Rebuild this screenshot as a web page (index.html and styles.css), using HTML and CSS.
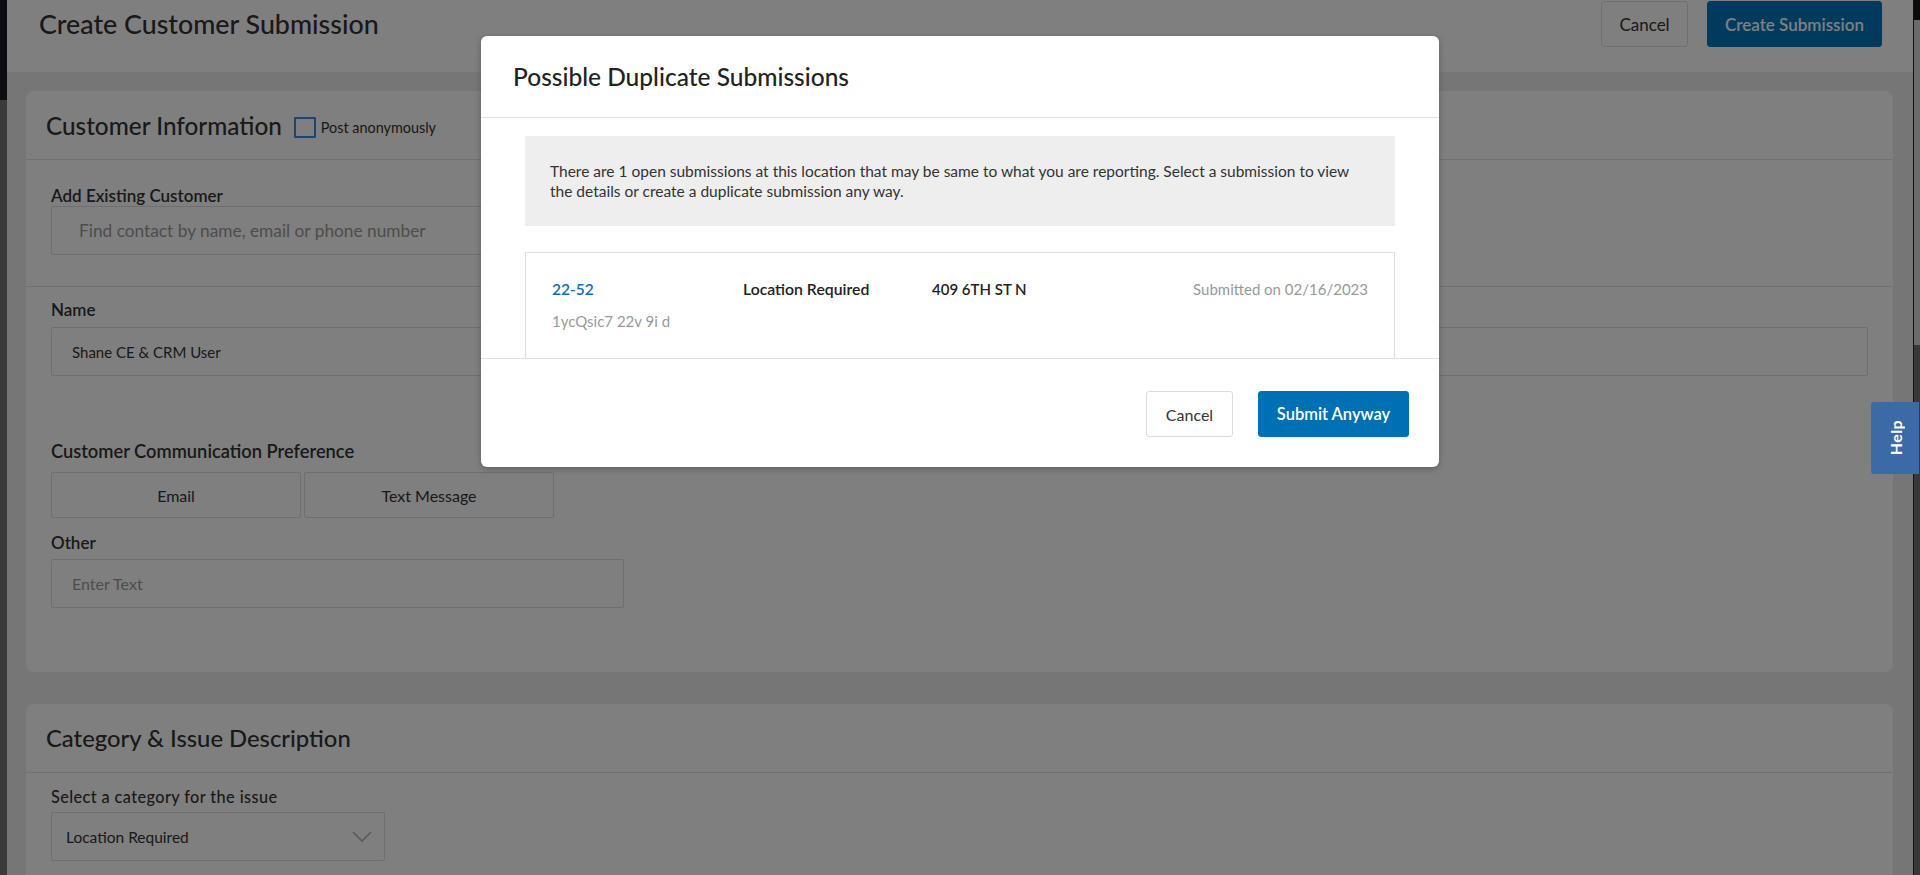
FILE: index.html
```html
<!DOCTYPE html>
<html lang="en">
<head>
<meta charset="utf-8">
<title>Create Customer Submission</title>
<link rel="stylesheet" href="styles.css">
</head>
<body>
<div class="app">
  <div class="shell-edge"><div class="shell-edge-top"></div></div>

  <div class="frame">
    <header class="page-header">
      <h1 class="page-title">Create Customer Submission</h1>
      <div class="header-actions">
        <button class="btn btn-default btn-cancel">Cancel</button>
        <button class="btn btn-primary btn-create">Create Submission</button>
      </div>
    </header>

    <main class="page-body">
      <section class="card card-customer">
        <div class="card-head">
          <h2 class="card-title">Customer Information</h2>
          <label class="anon"><span class="checkbox"></span><span class="anon-text">Post anonymously</span></label>
        </div>
        <div class="card-section section-search">
          <label class="field-label">Add Existing Customer</label>
          <div class="input input-search"><span class="placeholder">Find contact by name, email or phone number</span></div>
        </div>
        <div class="card-section section-contact">
          <label class="field-label">Name</label>
          <div class="input"><span class="value">Shane CE &amp; CRM User</span></div>
          <h3 class="group-label">Customer Communication Preference</h3>
          <div class="toggle-group">
            <button class="toggle">Email</button>
            <button class="toggle">Text Message</button>
          </div>
          <label class="field-label">Other</label>
          <div class="input input-other"><span class="placeholder">Enter Text</span></div>
        </div>
      </section>

      <section class="card card-category">
        <div class="card-head">
          <h2 class="card-title card-title-category">Category &amp; Issue Description</h2>
        </div>
        <div class="card-section section-category">
          <label class="field-label field-label-light">Select a category for the issue</label>
          <div class="input select">
            <span class="value">Location Required</span>
            <svg class="chevron" width="20" height="12" viewBox="0 0 20 12"><polyline points="1,1 10,10 19,1" fill="none" stroke="#b5b5b5" stroke-width="1.6"/></svg>
          </div>
        </div>
      </section>
    </main>

    <div class="backdrop"></div>

    <div class="modal" role="dialog">
      <div class="modal-header">
        <h2 class="modal-title">Possible Duplicate Submissions</h2>
      </div>
      <div class="modal-body">
        <div class="notice">There are 1 open submissions at this location that may be same to what you are reporting. Select a submission to view the details or create a duplicate submission any way.</div>
        <div class="dup-card">
          <a class="dup-id">22-52</a>
          <span class="dup-cat">Location Required</span>
          <span class="dup-addr">409 6TH ST N</span>
          <span class="dup-date">Submitted on 02/16/2023</span>
          <span class="dup-sub">1ycQsic7 22v 9i d</span>
        </div>
      </div>
      <div class="modal-footer">
        <button class="btn btn-default btn-mcancel">Cancel</button>
        <button class="btn btn-primary btn-submit">Submit Anyway</button>
      </div>
    </div>
  </div>

  <div class="scrollbar"><div class="scroll-thumb"></div></div>

  <a class="help-tab"><span class="help-text">Help</span></a>
</div>
</body>
</html>
```

FILE: styles.css
```css
* { box-sizing: border-box; }

html, body {
  margin: 0;
  padding: 0;
  height: 100%;
  overflow: hidden;
}

body {
  font-family: "Lato", "Open Sans", sans-serif;
  color: #333;
  background: #3b3b3b;
}

.app {
  display: flex;
  height: 875px;
  position: relative;
}

/* outer shell edges */
.shell-edge {
  width: 7px;
  flex: none;
  background: #3b3b3b;
}
.shell-edge-top {
  height: 100px;
  background: #0c0c12;
}

.scrollbar {
  width: 7px;
  flex: none;
  border-left: 1px solid #121212;
  background: linear-gradient(#0b0b0b 0 20px, #383838 20px);
}
.scroll-thumb {
  margin-top: 20px;
  height: 325px;
  background: #6b6b6b;
}

/* framed page */
.frame {
  flex: 1;
  position: relative;
  overflow: hidden;
  background: #ececec;
}

.page-header {
  height: 72px;
  background: #fff;
  display: flex;
  justify-content: space-between;
  align-items: flex-start;
  padding: 1px 31px 0 32px;
}

.page-title {
  margin: 0;
  font-size: 26.8px;
  line-height: 46px;
  font-weight: 500;
  color: #333;
}

.header-actions {
  display: flex;
  gap: 19px;
}

.btn {
  font-family: inherit;
  height: 46px;
  border-radius: 3px;
  font-size: 17px;
  padding: 0;
  cursor: pointer;
}
.btn-default {
  background: #fff;
  border: 1px solid #dcdcdc;
  color: #333;
}
.btn-primary {
  background: #0070b5;
  border: 1px solid #0070b5;
  color: #fff;
  font-weight: 600;
}
.btn-cancel { width: 87px; }
.btn-create { width: 175px; background: #0074b8; border-color: #0074b8; }

.page-body {
  padding: 19px 20px 0 19px;
  display: flex;
  flex-direction: column;
  gap: 32px;
}

.card {
  background: #fff;
  border-radius: 8px;
}

.card-head {
  height: 69px;
  border-bottom: 1px solid #e2e2e2;
  padding: 0 20px;
  display: flex;
  align-items: center;
  gap: 12px;
}

.card-title {
  margin: 0;
  font-size: 24.3px;
  font-weight: 500;
  color: #333;
}
.card-title-category { font-size: 23.8px; }

.anon {
  display: flex;
  align-items: center;
  gap: 5px;
  margin-top: 4px;
}
.checkbox {
  width: 22px;
  height: 21px;
  border: 2px solid #3b8fd5;
  border-radius: 1px;
}
.anon-text {
  font-size: 14.4px;
  color: #333;
}

.card-section {
  padding: 13px 25px 0;
}
.section-search {
  padding: 26px 25px 31px;
  border-bottom: 1px solid #e2e2e2;
}
.section-contact {
  padding-bottom: 64px;
}

.field-label {
  display: block;
  font-size: 17px;
  line-height: 20px;
  font-weight: 600;
  color: #333;
  margin-bottom: 7px;
}
.section-search .field-label { margin-bottom: 0; }
.field-label-light {
  font-size: 16.3px;
  font-weight: 500;
  margin-top: 1px;
  margin-bottom: 5px;
  letter-spacing: 0.4px;
}

.input {
  height: 49px;
  border: 1px solid #dedede;
  border-radius: 2px;
  display: flex;
  align-items: center;
  padding: 0 20px;
  font-size: 15px;
  background: #fff;
}
.input-search {
  width: 908px;
  padding-left: 27px;
  font-size: 17.3px;
}
.input-other { width: 573px; font-size: 16px; }

.placeholder { color: #9a9a9a; }
.value { color: #333; }

.group-label {
  margin: 64px 0 10px;
  font-size: 18.3px;
  line-height: 22px;
  font-weight: 600;
  color: #333;
}

.toggle-group {
  display: flex;
  gap: 3px;
  margin-bottom: 15px;
}
.toggle {
  font-family: inherit;
  width: 250px;
  height: 46px;
  background: #fff;
  border: 1px solid #dedede;
  border-radius: 2px;
  font-size: 16px;
  color: #333;
}
.section-contact .input-other { margin-top: -1px; }

.select {
  width: 334px;
  justify-content: space-between;
  padding: 0 12px 0 14px;
  font-size: 15.5px;
}
.card-category { min-height: 200px; }

/* backdrop + modal */
.backdrop {
  position: absolute;
  inset: 0;
  background: rgba(0, 0, 0, 0.5);
}

.modal {
  position: absolute;
  top: 36px;
  left: 50%;
  width: 958px;
  transform: translateX(-50%);
  background: #fff;
  border-radius: 6px;
  box-shadow: 0 2px 6px rgba(0,0,0,0.25);
}

.modal-header {
  height: 82px;
  border-bottom: 1px solid #e0e0e0;
  padding: 0 32px;
  display: flex;
  align-items: center;
}
.modal-title {
  margin: 0;
  font-size: 24.5px;
  font-weight: 500;
  color: #222;
}

.modal-body {
  height: 240px;
  overflow: hidden;
  padding: 18px 44px 0;
}

.notice {
  height: 90px;
  background: #eeeeee;
  padding: 0 25px;
  display: flex;
  align-items: center;
  font-size: 15.5px;
  line-height: 20px;
  color: #333;
}

.dup-card {
  margin-top: 26px;
  border: 1px solid #dddddd;
  padding: 25px 26px 40px;
  display: grid;
  grid-template-columns: 191px 189px 1fr auto;
  row-gap: 10px;
  font-size: 15px;
  line-height: 22px;
}
.dup-id { color: #0a6eb4; font-weight: 600; font-size: 15.5px; }
.dup-cat, .dup-addr { color: #222; font-weight: 600; }
.dup-cat { font-size: 15.8px; }
.dup-date { color: #999; text-align: right; }
.dup-sub { color: #999; grid-column: 1 / -1; }

.modal-footer {
  border-top: 1px solid #e0e0e0;
  padding: 32px 30px 30px;
  display: flex;
  justify-content: flex-end;
  gap: 25px;
}
.btn-mcancel { width: 87px; font-size: 16px; }
.btn-submit { width: 151px; font-size: 16.5px; }

/* help tab (floats above everything) */
.help-tab {
  position: absolute;
  top: 402px;
  right: 1px;
  width: 48px;
  height: 72px;
  background: #3c6aa6;
  border-radius: 3px 0 0 3px;
  display: flex;
  align-items: center;
  justify-content: center;
  z-index: 10;
}
.help-text {
  writing-mode: vertical-rl;
  transform: rotate(180deg);
  color: #fff;
  font-weight: 700;
  font-size: 16px;
  letter-spacing: 0.4px;
}
```
